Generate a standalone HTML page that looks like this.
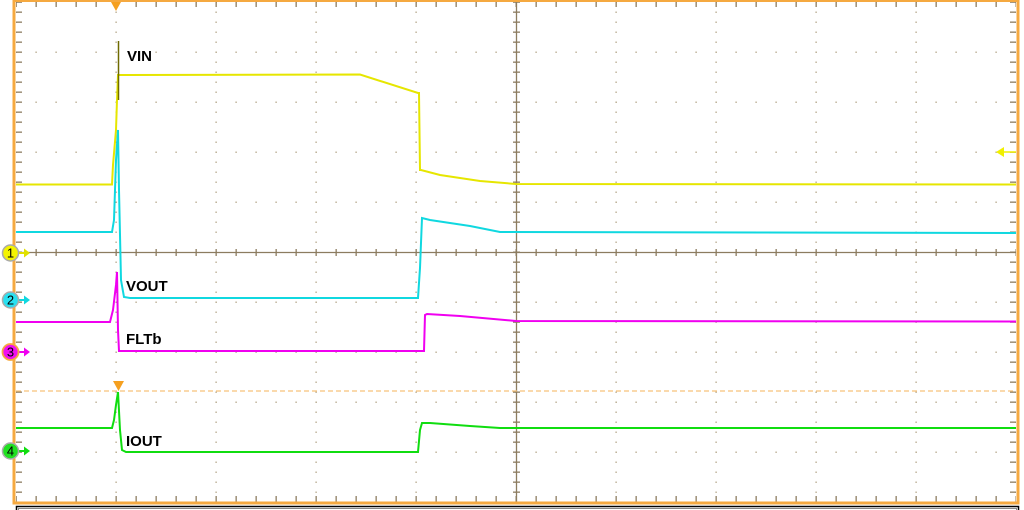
<!DOCTYPE html>
<html><head><meta charset="utf-8"><style>
html,body{margin:0;padding:0;background:#fff;width:1024px;height:510px;overflow:hidden}
svg{display:block}
text{font-family:"Liberation Sans",Arial,sans-serif;font-weight:bold;font-size:15px;fill:#000}
</style></head><body>
<svg width="1024" height="510" viewBox="0 0 1024 510" xmlns="http://www.w3.org/2000/svg">
<defs>
<pattern id="hd" patternUnits="userSpaceOnUse" x="15.5" y="1.5" width="20" height="50"><rect x="0" y="0" width="1.2" height="1.5" fill="#b0a284"/></pattern>
<pattern id="vd" patternUnits="userSpaceOnUse" x="15.5" y="1.5" width="100" height="10"><rect x="0" y="0" width="1.2" height="1.5" fill="#b0a284"/></pattern>
<pattern id="tv" patternUnits="userSpaceOnUse" x="0" y="1.5" width="1024" height="10"><rect x="0" y="0" width="1024" height="1.3" fill="#8c7c60"/></pattern>
<pattern id="th" patternUnits="userSpaceOnUse" x="15.5" y="0" width="20" height="510"><rect x="0" y="0" width="1.3" height="510" fill="#8c7c60"/></pattern>
</defs>
<rect x="16" y="2" width="1000" height="500" fill="url(#hd)"/>
<rect x="16" y="2" width="1000" height="500" fill="url(#vd)"/>
<rect x="16" y="2" width="6" height="500" fill="url(#tv)"/>
<rect x="1010" y="2" width="6" height="500" fill="url(#tv)"/>
<rect x="513" y="2" width="7" height="500" fill="url(#tv)"/>
<rect x="16" y="2" width="1000" height="5" fill="url(#th)"/>
<rect x="16" y="496" width="1000" height="6" fill="url(#th)"/>
<rect x="16" y="249" width="1000" height="7" fill="url(#th)"/>
<line x1="16" y1="252.5" x2="1016" y2="252.5" stroke="#8c7c60" stroke-width="1.3"/>
<line x1="516.5" y1="2" x2="516.5" y2="502" stroke="#8c7c60" stroke-width="1.3"/>
<line x1="16" y1="391" x2="1016" y2="391" stroke="#f6c27a" stroke-width="1.2" stroke-dasharray="5,3"/>
<polyline fill="none" stroke="#e6e600" stroke-width="2" points="16,184.5 112,184.5 113,165 116,130 117,100 118,75 360,74.5 418,93 419,93 420,170 421,170 440,175 480,181 516,184 1016,184.5"/>
<line x1="118.5" y1="41" x2="118.5" y2="100" stroke="#6e6a00" stroke-width="1.5"/>
<polyline fill="none" stroke="#10d8e0" stroke-width="2" points="16,232 112,232 114,220 116,160 118,130 119,190 121,280 124,297 130,298 418,298 420,268 422,218 430,220 470,226 500,232 1016,233"/>
<polyline fill="none" stroke="#f000f0" stroke-width="2" points="16,322 110,322 113,310 116,285 117,272 118,330 119,351 424,351 425,315 427,314 460,316 516,321 1016,321.5"/>
<polyline fill="none" stroke="#10dd10" stroke-width="2" points="16,428 112,428 114,420 116,405 118,392 120,430 122,450 126,452 418,452 420,430 422,423 430,423 470,426 500,428 1016,428"/>
<text x="127" y="61">VIN</text>
<text x="126" y="291">VOUT</text>
<text x="126" y="344">FLTb</text>
<text x="126" y="446">IOUT</text>
<rect x="14" y="0.5" width="1004" height="502.5" fill="none" stroke="#f5a940" stroke-width="3"/>
<rect x="16.5" y="506.5" width="1002" height="10" fill="none" stroke="#000" stroke-width="1.5"/>
<rect x="18.5" y="508.5" width="998" height="10" fill="none" stroke="#888" stroke-width="1"/>
<polygon points="111,2 121,2 116,11" fill="#f5a020"/>
<polygon points="113,381 124,381 118.5,391" fill="#f5a020"/>
<polygon points="996,152 1004,147 1004,157" fill="#f0f000"/>
<line x1="1004" y1="152" x2="1016" y2="152" stroke="#f0f000" stroke-width="1.5"/>
<g>
<line x1="14" y1="253" x2="25" y2="253" stroke="#e0e000" stroke-width="2"/><polygon points="24,248.5 30,253 24,257.5" fill="#e0e000"/>
<circle cx="10.5" cy="253" r="8" fill="#f4f400" stroke="#aaa" stroke-width="1.5"/>
<text x="10.5" y="257.5" text-anchor="middle" style="font-weight:normal;font-size:13px">1</text>
<line x1="14" y1="300" x2="25" y2="300" stroke="#10d8e0" stroke-width="2"/><polygon points="24,295.5 30,300 24,304.5" fill="#10d8e0"/>
<circle cx="10.5" cy="300" r="8" fill="#28e0f0" stroke="#aaa" stroke-width="1.5"/>
<text x="10.5" y="304.5" text-anchor="middle" style="font-weight:normal;font-size:13px">2</text>
<line x1="14" y1="352" x2="25" y2="352" stroke="#f000f0" stroke-width="2"/><polygon points="24,347.5 30,352 24,356.5" fill="#f000f0"/>
<circle cx="10.5" cy="352" r="8" fill="#f010f0" stroke="#f5a940" stroke-width="1.8"/>
<text x="10.5" y="356.5" text-anchor="middle" style="font-weight:normal;font-size:13px">3</text>
<line x1="14" y1="451" x2="25" y2="451" stroke="#10dd10" stroke-width="2"/><polygon points="24,446.5 30,451 24,455.5" fill="#10dd10"/>
<circle cx="10.5" cy="451" r="8" fill="#20e020" stroke="#aaa" stroke-width="1.5"/>
<text x="10.5" y="455.5" text-anchor="middle" style="font-weight:normal;font-size:13px">4</text>
</g>
</svg>
</body></html>
